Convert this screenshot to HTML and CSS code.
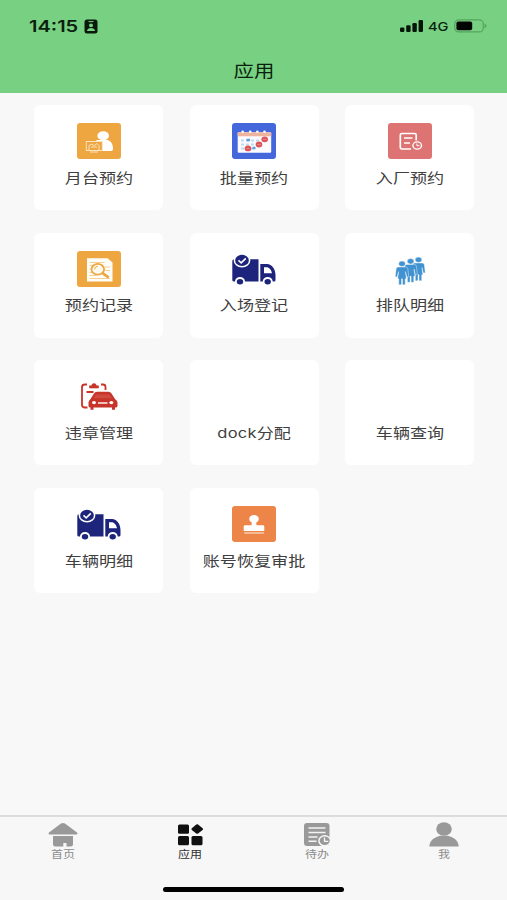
FILE: index.html
```html
<!DOCTYPE html>
<html lang="zh-CN">
<head>
<meta charset="utf-8">
<title>应用</title>
<link rel="stylesheet" href="styles.css">
</head>
<body>
<header class="top">
  <div class="status">
    <div class="status-left">
      <span class="time">14:15</span>
      <svg width="14" height="15" viewBox="0 0 14 15"><rect x=".5" y=".5" width="13" height="14" rx="2.5" fill="#081a0b"/><path d="M4.5 2.600h5" stroke="#78d182"/><ellipse cx="7" cy="6.300" rx="2" ry="1.900" fill="#78d182"/><path d="M3 12c0-4 8-4 8 0z" fill="#78d182"/></svg>
    </div>
    <div class="status-right">
      <svg width="24" height="13" viewBox="0 0 24 13" fill="#061508"><rect x="0" y="7.500" width="4.400" height="4.500" rx="1.200"/><rect x="6.200" y="5.300" width="4.400" height="6.700" rx="1.200"/><rect x="12.400" y="3" width="4.400" height="9" rx="1.200"/><rect x="18.600" y="0" width="4.400" height="12" rx="1.200"/></svg>
      <span class="net">4G</span>
      <svg width="33" height="14" viewBox="0 0 33 14"><rect x=".7" y=".9" width="28.600" height="12" rx="4" fill="none" stroke="#55a35f" stroke-width="1.200"/><rect x="2.400" y="2.600" width="15.800" height="8.600" rx="2" fill="#020602"/><path d="M30.600 4.600c2.400.8 2.400 3.800 0 4.600z" fill="#55a35f"/></svg>
    </div>
  </div>
  <h1 class="title"><span class="wide">应用</span></h1>
</header>

<main class="grid">
  <a class="card"><svg class="icon" viewBox="0 0 44 36"><rect width="44" height="36" rx="3" fill="#eda640"/><ellipse cx="26.200" cy="12.800" rx="5.800" ry="4.600" fill="#fff"/><path d="M19.500 17h11c4 1 5.500 5 5.500 9q0 2-2 2H19z" fill="#fff"/><rect x="9.300" y="18.500" width="16" height="9" fill="#eda640" stroke="#fbe3bb"/><path d="M12 27v-4.500l3-1.500 2 1.800 3-2.300 2 2V27M14 24h6M13 29h8" fill="none" stroke="#fbe3bb"/></svg><span class="label">月台预约</span></a>
  <a class="card"><svg class="icon" viewBox="0 0 44 36"><rect width="44" height="36" rx="3" fill="#4468dc"/><rect x="5.700" y="9.300" width="33.500" height="20.500" rx="1" fill="#fafaff"/><path d="M5.700 13.200v-3q0-1 1-1h31.500q1 0 1 1v3z" fill="#eeb49e"/><g fill="#fff"><circle cx="10.700" cy="8.700" r="1.300"/><circle cx="18.200" cy="8.700" r="1.300"/><circle cx="25.400" cy="8.700" r="1.300"/><circle cx="32.500" cy="8.700" r="1.300"/></g><path d="M9 17.500h20M9 21.500h15M9 25.500h15" stroke="#bddcf0" stroke-width="2" stroke-dasharray="3 2"/><path d="M14.500 17h3.500M20.500 25h3" stroke="#5ba3d9" stroke-width="2.300"/><g fill="#dc5558"><ellipse cx="32.700" cy="16.300" rx="3.300" ry="2.900"/><ellipse cx="27" cy="21.500" rx="3.300" ry="2.900"/><ellipse cx="16" cy="25.400" rx="3.300" ry="2.900"/></g><path d="M31 16.300h3.400M25.300 21.500h3.400M14.300 25.400h3.400" stroke="#f3a6a6" stroke-width=".6"/></svg><span class="label">批量预约</span></a>
  <a class="card"><svg class="icon" viewBox="0 0 44 36"><rect width="44" height="36" rx="3" fill="#de7373"/><path d="M23 26H14q-1.700 0-1.700-1.500V12q0-1.500 1.700-1.500h12.500q1.700 0 1.700 1.500v5.500M16 15h8.500M16 20h6" fill="none" stroke="#fff" stroke-width="1.700"/><ellipse cx="29.200" cy="22.500" rx="4.300" ry="3.600" fill="#de7373" stroke="#fff" stroke-width="1.400"/><path d="M28.900 20.500v2.200h2.600" fill="none" stroke="#fff"/></svg><span class="label">入厂预约</span></a>
  <a class="card"><svg class="icon" viewBox="0 0 44 36"><rect width="44" height="36" rx="3" fill="#eda640"/><path d="M10 7.300h20.500l5 4.200v19H10z" fill="#fffdf8"/><path d="M12.500 11.500h15M12.500 14.500h4M12.500 18h3M12.500 21.500h3M12.500 24.500h7M12.500 27.500h20M28 16h5M28 19.500h5" stroke="#f3c47d" stroke-width=".8"/><ellipse cx="20.800" cy="18.300" rx="6.300" ry="5.400" fill="#fff9ee" stroke="#eda640" stroke-width="1.700"/><path d="M17.500 18.500q.2-3 3.200-3.300" fill="none" stroke="#eda640"/><path d="M25.800 22.300l5 3.600" stroke="#eda640" stroke-width="2.700" stroke-linecap="round"/></svg><span class="label">预约记录</span></a>
  <a class="card"><svg class="icon" viewBox="0 0 44 36"><g id="truck"><path d="M2 8.300h24.500v22.200H13a5 4.500 0 0 0-10 0H2q-1.700 0-1.700-1.500V10q0-1.700 1.700-1.700z" fill="#1c247c"/><path d="M28.300 13H35c5 0 8.500 5.500 8.500 11v5q0 1.500-1.500 1.500h-1.300a5 4.500 0 0 0-10 0h-2.400zm3.700 3.200v6h8c-.7-3.500-2.800-6-5.500-6z" fill="#1c247c" fill-rule="evenodd"/><ellipse cx="8" cy="30.800" rx="3.200" ry="2.700" fill="#1c247c"/><ellipse cx="35.700" cy="30.800" rx="3.200" ry="2.700" fill="#1c247c"/><ellipse cx="10" cy="9.400" rx="7.600" ry="6.400" fill="#1c247c" stroke="#fff" stroke-width="1.500"/><path d="M6.500 9.300l2.700 2.500 4.600-4.400" fill="none" stroke="#fff" stroke-width="1.600"/></g></svg><span class="label">入场登记</span></a>
  <a class="card"><svg class="icon" viewBox="0 0 44 36"><defs><g id="person"><ellipse cy="0" rx="3.300" ry="2.700"/><path d="M-3.800 3.200h7.600q1.700 0 2 1.500l1 8.300-1.900.3-1.500-5.500 1 7.200H3.200v6H.5V15h-1v6h-2.700v-6h-1.200l1-7.200-1.500 5.500-1.900-.3 1-8.300q.3-1.500 2-1.500z"/></g></defs><g fill="#4192d0" stroke="#fff" stroke-width=".4"><use href="#person" x="30.500" y="8.800"/><use href="#person" x="22.600" y="10.300"/><use href="#person" x="14" y="12.800"/></g></svg><span class="label">排队明细</span></a>
  <a class="card"><svg class="icon" viewBox="0 0 44 36"><g fill="none" stroke="#c73429" stroke-width="1.800"><path d="M10 6.500H8q-3 0-3 2.500v18q0 2.500 3 2.500h2.500M24 6.500h2q2.500 0 2.500 2.500v3M9.500 14h7"/><path d="M12.500 10h9V7.800h-2.200q0-2.200-2.300-2.200T14.700 7.800h-2.200z" fill="#c73429" stroke-width=".6"/></g><path d="M13.500 21l3.500-5.500q1-1.700 3-1.700h11.500q2 0 3 1.700l3.500 5.500q2.500 1.500 2.500 3.500v3.500q0 1.500-2 1.500H13.500q-2 0-2-1.500v-3.500q0-2 2-3.500z" fill="#c73429"/><path d="M16.500 20.300l2.300-3.800h13.900l2.300 3.800z" fill="#cf4a40"/><path d="M15 29v2.700M36.500 29v2.700" stroke="#c73429" stroke-width="3"/><ellipse cx="17" cy="24.600" rx="2" ry="1.600" fill="#fff"/><ellipse cx="34.300" cy="24.600" rx="2" ry="1.600" fill="#fff"/><path d="M21 25h9.500" stroke="#fff" stroke-width="1.400"/></svg><span class="label">违章管理</span></a>
  <a class="card"><span class="icon"></span><span class="label"><span class="latin">dock</span>分配</span></a>
  <a class="card"><span class="icon"></span><span class="label">车辆查询</span></a>
  <a class="card"><svg class="icon" viewBox="0 0 44 36"><use href="#truck"/></svg><span class="label">车辆明细</span></a>
  <a class="card"><svg class="icon" viewBox="0 0 44 36"><rect width="44" height="36" rx="3" fill="#ed8549"/><ellipse cx="22" cy="13" rx="4.800" ry="4" fill="#fff"/><path d="M20 15h4l.5 4.300H31q1.300 0 1.300 1.200V25H11.700v-4.500q0-1.200 1.300-1.200h6.500z" fill="#fff"/><path d="M12.300 27h19.500" stroke="#f8cdb0" stroke-width="1.500"/></svg><span class="label">账号恢复审批</span></a>
</main>

<footer class="bottom">
  <nav class="tabs">
    <a class="tab"><svg width="30" height="26" viewBox="0 0 30 26" fill="#999"><path d="M13 1.600q2-1.400 4 0l12 9q1.200 1.400-.5 1.900h-27q-1.700-.5-.5-1.900zM5 14h20v8q0 2.500-2.500 2.500h-4V21h-3.200v3.500H7.500Q5 24.500 5 22z"/></svg><span class="tab-label">首页</span></a>
    <a class="tab active"><svg width="30" height="26" viewBox="0 0 30 26" fill="#111"><rect x="3" y="2.500" width="11" height="9.200" rx="1.500"/><rect x="3" y="14" width="11" height="9.200" rx="1.500"/><rect x="16.500" y="14" width="11" height="9.200" rx="1.500"/><path d="M21.300 2.500q.9-.7 1.800 0l4.500 3.800q.9.800 0 1.600l-4.500 3.600q-.9.700-1.800 0l-4.500-3.600q-.9-.8 0-1.600z"/></svg><span class="tab-label">应用</span></a>
    <a class="tab"><svg width="30" height="26" viewBox="0 0 30 26"><rect x="2" y="1" width="25.500" height="23" rx="3" fill="#999"/><path d="M6.500 6h17M6.500 10.500h17M6.500 15h9M6.500 19.300h8" stroke="#f3f3f3" stroke-width="1.400"/><ellipse cx="22.700" cy="18.800" rx="5.800" ry="5" fill="#999" stroke="#f7f7f7" stroke-width="1.500"/><path d="M22.500 15.500v3.800h3.800" fill="none" stroke="#f7f7f7" stroke-width="1.300"/></svg><span class="tab-label">待办</span></a>
    <a class="tab"><svg width="30" height="26" viewBox="0 0 30 26" fill="#999"><ellipse cx="15" cy="7" rx="7.800" ry="6.700"/><path d="M.3 24.500c.5-6.500 5-9 10.700-10.700h8c5.700 1.700 10.200 4.200 10.700 10.700z"/></svg><span class="tab-label">我</span></a>
  </nav>
  <div class="home-bar"></div>
</footer>
</body>
</html>
```
FILE: styles.css
```css
* { box-sizing: border-box; }

body {
  margin: 0;
  height: 900px;
  display: flex;
  flex-direction: column;
  overflow: hidden;
  background: #f8f8f8;
  color: #404040;
  font-family: "Liberation Sans", "Noto Sans CJK SC", sans-serif;
}

svg { display: block; flex: none; }

.top {
  height: 93px;
  background: #78d182;
  color: #0b1f0e;
}

.status {
  height: 52px;
  padding: 0 20px 0 29px;
  display: flex;
  align-items: center;
  justify-content: space-between;
}

.status-left,
.status-right {
  display: flex;
  align-items: center;
}

.time {
  width: 55px;
  font: 600 16px/20px Inter, sans-serif;
  transform: scaleX(1.25);
  transform-origin: left;
}

.net {
  width: 26px;
  margin-left: 4px;
  padding-top: 1px;
  font: 500 12px/16px Inter, sans-serif;
  transform: scaleX(1.22);
  transform-origin: left;
}

.title {
  margin: 0;
  padding-top: 1px;
  font-size: 17px;
  line-height: 38px;
  font-weight: 400;
  text-align: center;
}

.wide {
  display: inline-block;
  transform: scaleX(1.2);
}

.grid {
  flex: 1;
  padding: 12px 33px 0 34px;
  display: grid;
  grid-template-columns: repeat(3, 129px);
  grid-auto-rows: 105px;
  justify-content: space-between;
  gap: 22.700px 0;
}

.card {
  padding-top: 18px;
  display: flex;
  flex-direction: column;
  align-items: center;
  background: #fff;
  border-radius: 6px;
}

.icon {
  width: 44px;
  height: 36px;
}

.label {
  margin-top: 7.500px;
  font-size: 14px;
  line-height: 22px;
  white-space: nowrap;
  transform: scaleX(1.22);
}

.latin {
  font-family: Inter, sans-serif;
  font-size: 13.500px;
  letter-spacing: .2px;
}

.bottom {
  height: 85px;
  border-top: 2px solid #dcdcdc;
  background: #f7f7f7;
}

.tabs {
  height: 70px;
  display: flex;
}

.tab {
  flex: 1;
  padding-top: 5px;
  display: flex;
  flex-direction: column;
  align-items: center;
  color: #8c8c8c;
}

.active { color: #303030; }

.tab-label {
  font-size: 10px;
  line-height: 14px;
  transform: scaleX(1.2);
}

.home-bar {
  width: 181px;
  height: 5px;
  margin: 0 auto;
  border-radius: 3px;
  background: #000;
}
```
